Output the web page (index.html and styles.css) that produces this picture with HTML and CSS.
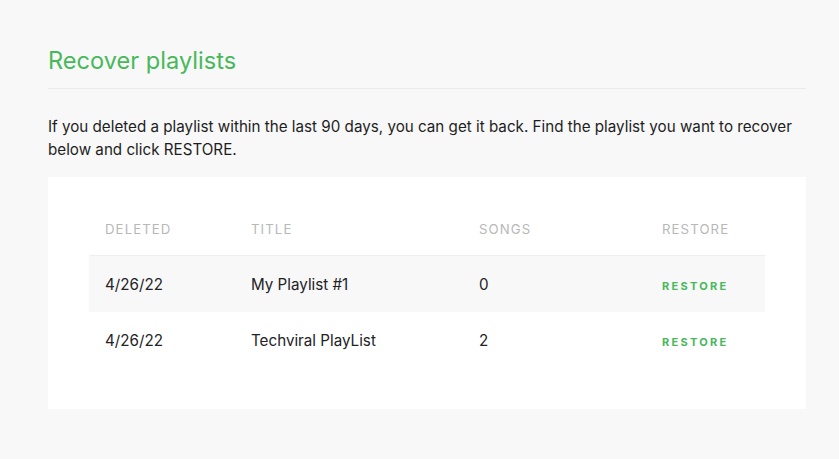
FILE: index.html
```html
<!DOCTYPE html>
<html>
<head>
<meta charset="utf-8">
<link rel="stylesheet" href="styles.css">
</head>
<body>
<main class="page">
  <h1 class="title">Recover playlists</h1>
  <p class="intro">If you deleted a playlist within the last 90 days, you can get it back. Find the playlist you want to recover below and click RESTORE.</p>
  <section class="card">
    <div class="table">
      <div class="row head">
        <div class="cell">Deleted</div>
        <div class="cell">Title</div>
        <div class="cell">Songs</div>
        <div class="cell">Restore</div>
      </div>
      <div class="row item hl">
        <div class="cell">4/26/22</div>
        <div class="cell">My Playlist #1</div>
        <div class="cell">0</div>
        <div class="cell"><a class="restore" href="#">Restore</a></div>
      </div>
      <div class="row item">
        <div class="cell">4/26/22</div>
        <div class="cell">Techviral PlayList</div>
        <div class="cell">2</div>
        <div class="cell"><a class="restore" href="#">Restore</a></div>
      </div>
    </div>
  </section>
</main>
</body>
</html>
```
FILE: styles.css
```css
html, body {
  margin: 0;
  background: #f8f8f8;
}
body {
  font-family: Inter, "Noto Sans", sans-serif;
  color: #222326;
}
.page {
  width: 758px;
  padding: 45px 0 0 48px;
}
.title {
  margin: 0;
  font-size: 23.6px;
  line-height: 32px;
  font-weight: 400;
  color: #48b85b;
  padding-bottom: 11px;
  border-bottom: 1px solid #ebebeb;
}
.intro {
  margin: 26px 0 16px;
  font-size: 15.2px;
  line-height: 23px;
  color: #1e1e1e;
}
.card {
  background: #fff;
  padding: 40px 41px 41px;
}
.row {
  display: grid;
  grid-template-columns: 146px 228px 183px 1fr;
  align-items: center;
}
.cell {
  padding-left: 16px;
}
.head {
  padding: 5px 0 19px;
  line-height: 14px;
  font-size: 13.2px;
  letter-spacing: 1.1px;
  text-transform: uppercase;
  color: #b8b8b8;
  border-bottom: 1px solid #eeeeee;
}
.item {
  height: 56px;
  font-size: 15.2px;
  padding-top: 1px;
  box-sizing: border-box;
}
.hl {
  background: #f8f8f8;
}
.restore {
  color: #48b85b;
  text-decoration: none;
  text-transform: uppercase;
  font-size: 11px;
  font-weight: 700;
  letter-spacing: 2.3px;
}
```
